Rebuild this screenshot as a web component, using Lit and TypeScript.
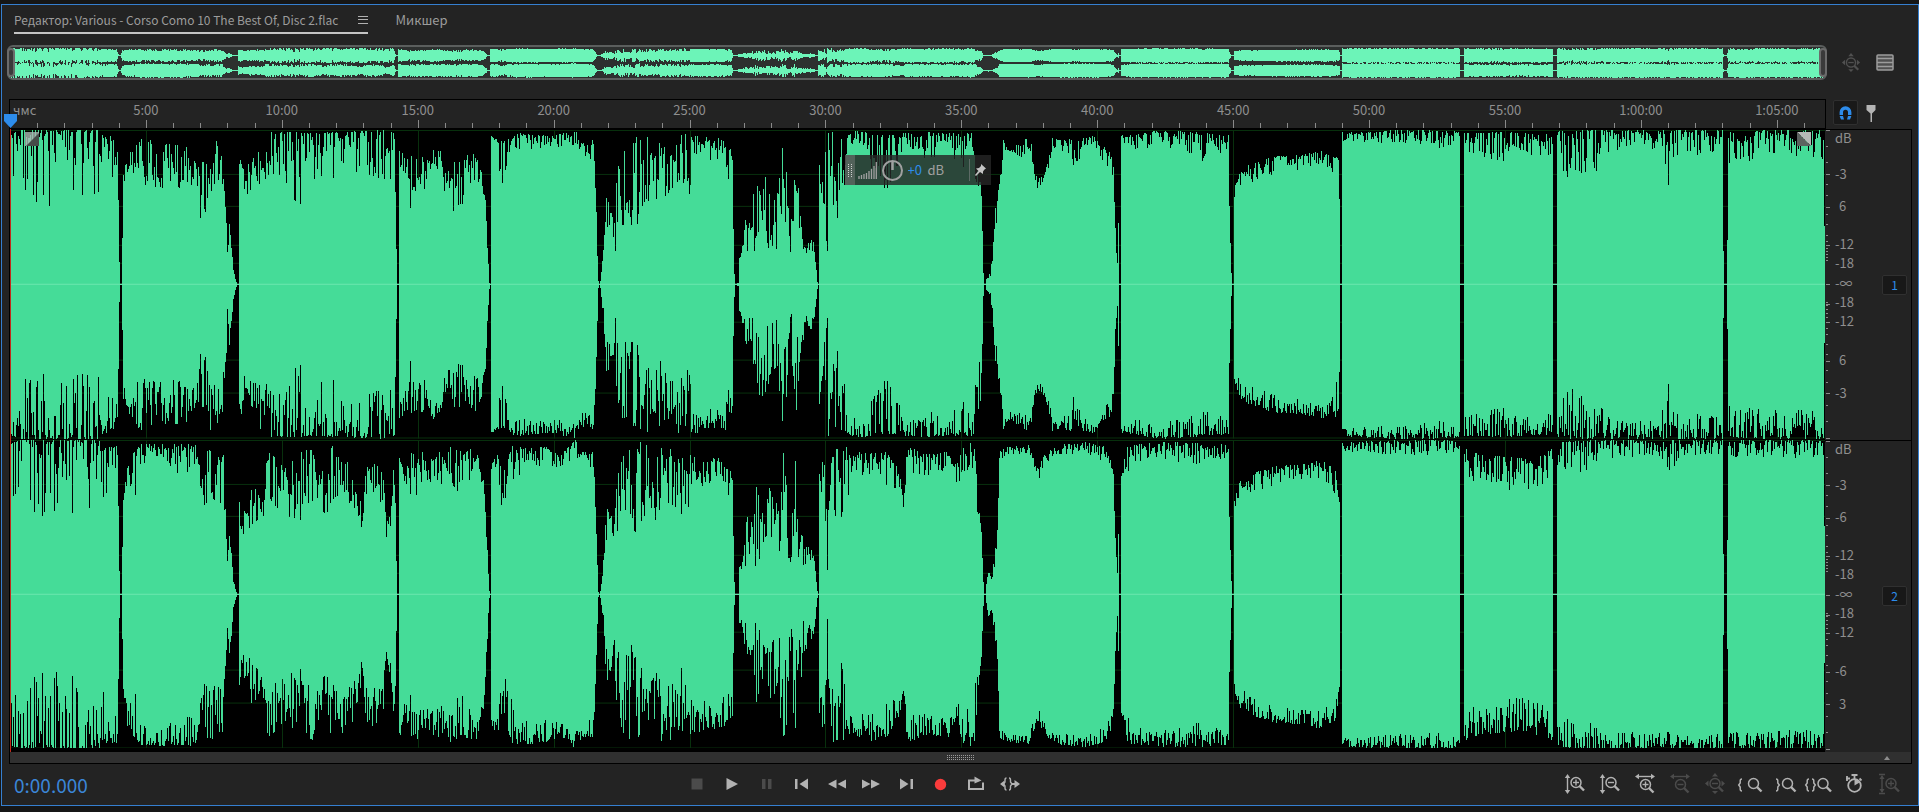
import { LitElement, html, css, svg } from "lit";
import { customElement } from "lit/decorators.js";

const WIDTH = 1815;
const HALF = 154;
const ORIGIN = 10;

/** x, distance of the outer edge from full scale, depth of the dips, exponent of the dips */
type Key = [number, number, number, number?];

const LEFT: Key[] = [
  [10, 4, 55, 4], [20, 0, 60, 5], [46, 0, 85, 5], [75, 0, 75, 5], [98, 0, 66, 5], [103, 6, 60, 3], [117, 6, 40, 2], [118, 66, 72], [119, 130, 140], [120, 154, 154],
  [121, 154, 154], [122, 106, 110], [123, 40, 50], [130, 22, 60], [140, 8, 62, 1], [188, 12, 60, 1], [192, 30, 55], [200, 32, 95], [206, 30, 90], [210, 8, 62, 1], [222, 12, 60, 1], [225, 50, 82], [227, 120, 132], [229, 94, 112], [231, 112, 124], [233, 138, 142], [235, 149, 151], [237, 154, 154],
  [238, 154, 154], [239, 30, 55], [245, 12, 66, 1], [258, 10, 55, 1], [265, 10, 64, 1], [270, 2, 48, 3], [300, 2, 80, 3], [306, 3, 40, 3], [335, 2, 76, 3], [340, 2, 40, 3], [380, 0, 50, 3], [386, 0, 66, 2], [391, 2, 60, 2], [394, 2, 15], [395, 60, 66], [396, 118, 124], [397, 154, 154],
  [398, 154, 154], [399, 16, 40], [405, 30, 60, 1], [410, 20, 80, 1], [414, 8, 76, 1], [421, 20, 70, 1], [430, 16, 40, 1], [442, 18, 45, 1], [444, 45, 62], [450, 32, 84, 1], [463, 28, 80, 1], [472, 18, 70, 1], [480, 36, 60], [485, 66, 78], [487, 110, 120], [489, 150, 153], [490, 154, 154],
  [491, 6, 8], [498, 9, 14], [500, 10, 70], [502, 12, 64], [508, 8, 28], [515, 3, 20], [550, 6, 21], [575, 0, 16], [582, 12, 30], [590, 12, 30], [593, 8, 20], [595, 42, 60], [597, 118, 130], [598, 150, 153], [599, 154, 154],
  [600, 150, 152], [603, 120, 135], [606, 68, 100], [609, 70, 100], [614, 80, 112], [616, 46, 134], [620, 18, 95, 1], [630, 8, 105, 1], [640, 2, 95, 1], [646, 4, 74, 1], [660, 8, 90, 1], [670, 6, 60, 1], [680, 4, 70, 1.5], [690, 4, 70, 1.5], [694, 5, 26], [715, 8, 32], [724, 4, 30], [727, 14, 60], [732, 18, 40], [733, 95, 105], [734, 142, 146], [735, 154, 154],
  [738, 153, 154], [739, 126, 132], [743, 112, 128], [746, 72, 128, 1], [751, 78, 128, 1], [756, 40, 126, 1], [762, 28, 118, 1], [768, 36, 126, 1], [773, 60, 122, 1], [778, 30, 118, 1], [781, 0, 110, 1], [786, 10, 90, 1], [788, 64, 124, 1], [791, 84, 126, 1], [794, 10, 90, 1], [800, 60, 130, 1], [806, 96, 128, 1], [813, 112, 122], [815, 130, 136], [817, 150, 152], [818, 154, 154],
  [819, 34, 38], [821, 42, 82], [823, 2, 80, 1], [825, 20, 120], [827, 118, 134], [828, 0, 50, 1], [835, 2, 90, 1], [841, 3, 90, 1], [848, 5, 16], [855, 0, 22], [868, 3, 30], [880, 5, 64, 1.5], [892, 5, 70], [905, 3, 14], [930, 2, 34], [945, 3, 14], [960, 2, 40], [974, 3, 44], [978, 30, 88], [980, 32, 70], [982, 92, 106], [983, 140, 145], [984, 154, 154],
  [985, 154, 154], [986, 146, 149], [990, 143, 147], [992, 125, 135], [995, 75, 100], [998, 60, 84], [1001, 36, 50], [1003, 10, 20], [1010, 20, 30], [1025, 8, 26], [1031, 14, 28], [1034, 44, 54], [1038, 48, 60], [1042, 46, 54], [1048, 30, 40], [1052, 8, 22], [1060, 10, 24], [1070, 8, 26], [1074, 14, 52], [1082, 8, 22], [1095, 6, 22], [1102, 15, 32], [1110, 22, 40], [1113, 36, 50], [1115, 96, 110], [1117, 132, 136], [1118, 92, 100], [1119, 154, 154],
  [1120, 154, 154], [1121, 5, 12], [1140, 3, 22], [1165, 0, 16], [1205, 3, 32], [1228, 5, 18], [1229, 76, 84], [1231, 140, 146], [1232, 154, 154],
  [1233, 154, 154], [1234, 58, 68], [1240, 40, 60], [1250, 34, 54], [1262, 30, 50], [1280, 25, 42], [1300, 25, 40], [1322, 20, 40], [1330, 26, 46], [1335, 22, 56], [1338, 30, 64], [1339, 60, 70], [1340, 154, 154],
  [1341, 154, 154], [1342, 2, 12], [1400, 0, 15], [1440, 0, 18], [1459, 1, 14], [1460, 154, 154], [1463, 154, 154],
  [1464, 3, 24], [1500, 2, 32], [1530, 3, 28], [1552, 3, 26], [1553, 154, 154], [1556, 154, 154],
  [1557, 0, 40], [1575, 0, 56], [1600, 0, 44], [1610, 0, 20], [1660, 0, 20], [1668, 0, 58], [1680, 0, 28], [1722, 0, 24], [1723, 110, 130], [1724, 154, 154], [1726, 154, 154], [1727, 100, 120],
  [1728, 2, 34], [1760, 0, 30], [1823, 0, 30], [1824, 96, 100], [1826, 96, 100],
];

const between = (from: Key[], lo: number, hi: number) => from.filter((k) => k[0] >= lo && k[0] < hi);

const RIGHT: Key[] = [
  ...between(LEFT, 0, 123),
  [123, 50, 60], [128, 15, 40], [134, 12, 66, 3], [140, 4, 24], [165, 3, 18], [176, 4, 40, 3], [199, 3, 26], [201, 45, 90], [206, 8, 75, 1], [210, 8, 60, 1], [224, 12, 76, 1], [226, 98, 100],
  ...between(LEFT, 227, 239),
  [239, 62, 88], [243, 72, 96, 1], [250, 45, 92, 1], [258, 42, 86, 1], [264, 36, 76, 1], [268, 8, 56, 1], [276, 15, 74, 1], [285, 26, 76, 1], [300, 8, 84, 1], [310, 3, 60, 1.5], [318, 28, 70, 1], [330, 4, 80, 1], [340, 10, 50, 1], [350, 14, 66, 1], [361, 64, 92, 1], [367, 18, 60, 1], [382, 26, 64, 1], [386, 76, 98, 1], [390, 60, 88, 1], [393, 30, 44],
  ...between(LEFT, 395, 399),
  [399, 5, 20], [404, 40, 52], [410, 12, 80, 1.3], [418, 10, 54], [430, 15, 44, 1.3], [448, 5, 46, 1.3], [465, 12, 56], [475, 5, 34], [480, 26, 44], [484, 44, 56],
  ...between(LEFT, 487, 491),
  [491, 22, 32], [498, 14, 40], [501, 30, 90], [504, 30, 76], [512, 5, 46], [530, 5, 24], [550, 8, 32], [560, 14, 28], [575, 0, 16], [582, 12, 36], [592, 12, 28], [594, 34, 50],
  ...between(LEFT, 596, 670),
  [670, 8, 64, 1.3], [680, 10, 82, 1.3], [688, 10, 78, 1.3], [692, 16, 44], [705, 18, 48], [720, 18, 38], [727, 26, 76], [732, 32, 50],
  ...between(LEFT, 733, 828),
  [828, 0, 70, 1], [840, 3, 94, 1], [848, 6, 56], [855, 14, 40], [870, 8, 36], [885, 10, 50], [896, 26, 62], [903, 48, 70], [907, 6, 36], [925, 14, 36], [948, 12, 32], [956, 26, 48], [965, 0, 36], [974, 6, 60], [978, 60, 88], [981, 92, 112], [983, 142, 146], [984, 154, 154],
  [985, 154, 154], [986, 142, 146], [988, 130, 136], [991, 138, 142], [995, 108, 122], [997, 90, 120], [998, 58, 62], [999, 12, 20], [1005, 7, 16], [1028, 5, 14], [1033, 18, 28], [1038, 28, 40], [1044, 14, 28], [1056, 4, 15], [1085, 2, 15], [1104, 6, 22], [1110, 18, 32], [1113, 34, 46],
  ...between(LEFT, 1115, 1121),
  [1121, 30, 38], [1125, 8, 34], [1134, 4, 24], [1160, 2, 20], [1200, 2, 28], [1228, 4, 18],
  ...between(LEFT, 1229, 1464),
  [1464, 6, 24], [1468, 12, 42], [1500, 16, 48], [1520, 18, 54], [1545, 12, 50], [1552, 8, 26],
  ...between(LEFT, 1553, 1557),
  [1557, 2, 30], [1590, 0, 36], [1600, 0, 18], [1660, 0, 18], [1670, 0, 36], [1680, 0, 16], [1722, 0, 16],
  ...between(LEFT, 1723, 1728),
  [1728, 0, 18], [1823, 0, 20], [1824, 86, 90], [1826, 86, 90],
];

function rng(seed: number) {
  let s = seed;
  return () => {
    s = (s + 0x6d2b79f5) | 0;
    let t = Math.imul(s ^ (s >>> 15), 1 | s);
    t = (t + Math.imul(t ^ (t >>> 7), 61 | t)) ^ t;
    return ((t ^ (t >>> 14)) >>> 0) / 4294967296;
  };
}

/** Outline of one channel, one step per column; now and then a column dips deeper. */
function outline(keys: Key[], seed: number): string {
  const rand = rng(seed);
  const top: number[] = [];
  const low: number[] = [];
  let i = 0;
  for (let c = 0; c < WIDTH; c++) {
    const x = c + ORIGIN;
    while (i < keys.length - 2 && keys[i + 1][0] <= x) i++;
    const a = keys[i];
    const b = keys[i + 1];
    const t = Math.min(1, Math.max(0, (x - a[0]) / (b[0] - a[0] || 1)));
    const outer = a[1] + (b[1] - a[1]) * t;
    const inner = a[2] + (b[2] - a[2]) * t;
    const dip = rand() < 0.16;
    const power = dip ? 0.8 : (a[3] ?? 2);
    const shared = rand();
    const mixed = rand() < 0.5 ? shared : rand();
    top.push(Math.round(outer + (inner - outer) * Math.pow(shared, power)));
    low.push(Math.round(outer + (inner - outer) * Math.pow(mixed, power)));
  }
  let d = `M0 ${top[0]}`;
  top.forEach((v, c) => (d += `V${v}H${c + 1}`));
  for (let c = WIDTH - 1; c >= 0; c--) d += `V${HALF * 2 + 1 - low[c]}H${c}`;
  return d + "Z";
}

const SHAPES = [outline(LEFT, 7), outline(RIGHT, 23)];
const MAJOR = Array.from({ length: 13 }, (_, i) => (i + 1) * 5);
const STEP = 27.18;
const GRID_ROWS = [0, 44, 76, 115, 133, 192, 230, 263, 308];
const MINOR_DB = [16, 32, 54, 65, 84, 94, 105, 111, 118, 121, 124, 127, 130, 172, 175, 179, 183, 187, 198, 204, 214, 224, 240, 252, 275, 291];
const MAJOR_DB = [0, 44, 77, 115, 154, 174, 192, 231, 263, 308];
const DB_LABELS = [
  ["dB", "-3", "6", "-12", "-18", "-∞", "-18", "-12", "6", "-3"],
  ["dB", "-3", "-6", "-12", "-18", "-∞", "-18", "-12", "-6", "3"],
];

const timeLabel = (m: number) => (m < 60 ? `${m}:00` : `${Math.floor(m / 60)}:${String(m % 60).padStart(2, "0")}:00`);

const lens = (x: number, y: number, sign: string) => svg`
  <circle cx=${x} cy=${y} r="5" fill="none" stroke="currentColor" stroke-width="1.5"/>
  <path d="M${x + 3.5} ${y + 3.5}L${x + 8} ${y + 8}" stroke="currentColor" stroke-width="2.4"/>
  ${sign ? svg`<path d="M${x - 3} ${y}h6" stroke="currentColor" stroke-width="1.4"/>` : ""}
  ${sign === "+" ? svg`<path d="M${x} ${y - 3}v6" stroke="currentColor" stroke-width="1.4"/>` : ""}`;
const vArrow = svg`<path d="M3.5 3V19" stroke="currentColor" stroke-width="1.4"/><path d="M3.5 1L6.2 5H.8ZM3.5 21L6.2 17H.8Z" fill="currentColor"/>`;
const hArrow = svg`<path d="M3 3.5H19" stroke="currentColor" stroke-width="1.4"/><path d="M1 3.5L5 .8V6.2ZM21 3.5L17 .8V6.2Z" fill="currentColor"/>`;
const star = svg`<path d="M11 0L14 3.5H8ZM11 21L14 18H8ZM1 10.5L4.5 7.5V13.5ZM21 10.5L17.500 7.500V13.5Z" fill="currentColor"/>`;
const openBrace = (x: number) => svg`<path d="M${x + 3} 6q-1.800 0-1.800 2v2l-1.500 2 1.500 2v2q0 2 1.800 2" fill="none" stroke="currentColor" stroke-width="1.500"/>`;
const closeBrace = (x: number) => svg`<path d="M${x} 6q1.800 0 1.800 2v2l1.500 2-1.500 2v2q0 2-1.800 2" fill="none" stroke="currentColor" stroke-width="1.500"/>`;

const ZOOMS = [
  { label: "Увеличить амплитуду", off: false, art: svg`${vArrow}${lens(12, 9.5, "+")}` },
  { label: "Уменьшить амплитуду", off: false, art: svg`${vArrow}${lens(12, 9.5, "-")}` },
  { label: "Увеличить время", off: false, art: svg`${hArrow}${lens(11.500, 11.5, "+")}` },
  { label: "Уменьшить время", off: true, art: svg`${hArrow}${lens(11.500, 11.5, "-")}` },
  { label: "Полное уменьшение", off: true, art: svg`${star}${lens(11, 10.5, "-")}` },
  { label: "К точке входа", off: false, art: svg`${openBrace(0)}${lens(14.5, 10.5, "")}` },
  { label: "К точке выхода", off: false, art: svg`${closeBrace(2)}${lens(13.5, 10.5, "")}` },
  { label: "К выделению", off: false, art: svg`${openBrace(-3)}${closeBrace(3)}${lens(14, 10.5, "")}` },
  {
    label: "Масштаб по времени", off: false,
    art: svg`<circle cx="10.500" cy="12.500" r="6.300" fill="none" stroke="currentColor" stroke-width="1.800"/><path d="M10.500 12.500V6.500A6 6 0 0 1 15.500 9.500Z" fill="currentColor"/><path d="M7.500 2H13.500M10.500 2.500V6.500M15.500 5.500L17.500 7.500M3 3V8M2 5.500H6" stroke="currentColor" stroke-width="1.800"/>`,
  },
  { label: "Масштаб дорожки", off: true, art: svg`<path d="M0 1.500H6M0 20.500H6" stroke="currentColor" stroke-width="1.500"/><path d="M3 3V19" stroke="currentColor" stroke-width="1.400"/><path d="M3 2L5.500 6H.5ZM3 20L5.500 16H.5Z" fill="currentColor"/>${lens(12, 10.500, "+")}` },
];

const TRANSPORT = [
  { label: "Стоп", off: true, art: svg`<path d="M5.500 5.500h11v11h-11Z" fill="currentColor"/>` },
  { label: "Воспроизведение", off: false, art: svg`<path d="M5.500 5L17 11L5.500 17Z" fill="currentColor"/>` },
  { label: "Пауза", off: true, art: svg`<path d="M6 6h3.500v10H6ZM12 6h3.500v10H12Z" fill="currentColor"/>` },
  { label: "В начало", off: false, art: svg`<path d="M4 6h2.500v10H4ZM17 5.500v11L8.500 11Z" fill="currentColor"/>` },
  { label: "Назад", off: false, art: svg`<path d="M10.500 6.500v9L2 11ZM20 6.500v9L11.500 11Z" fill="currentColor"/>` },
  { label: "Вперёд", off: false, art: svg`<path d="M1 6.500v9L9.500 11ZM10 6.500v9L19 11Z" fill="currentColor"/>` },
  { label: "В конец", off: false, art: svg`<path d="M4 5.500v11L12.500 11ZM14.500 6H17v10h-2.500Z" fill="currentColor"/>` },
  { label: "Запись", off: false, art: svg`<circle cx="9.500" cy="11.500" r="5.700" fill="#fa3c3c"/>` },
  { label: "Повтор", off: false, art: svg`<path d="M7 7.500H3V16H17V9.500" fill="none" stroke="currentColor" stroke-width="2"/><path d="M8.500 3.500L15.500 7.500L8.500 10.500ZM7 6.500h3v2H7Z" fill="currentColor"/>` },
  { label: "Пропуск выделения", off: false, art: svg`<path d="M5.500 5Q4 5 4 7V9L2.500 11L4 13V15Q4 17 5.500 17M8 5Q9.500 5 9.500 7V9L11 11L9.500 13V15Q9.500 17 8 17" fill="none" stroke="currentColor" stroke-width="1.400"/><path d="M3.500 7.500V14.500L-1 11ZM11 10h2.500V7L19 11L13.500 15V12H11Z" fill="currentColor"/>` },
];

@customElement("app-root")
export class AppRoot extends LitElement {
  static styles = css`
    :host {
      display: block;
      font-family: "Noto Sans CJK SC", "Noto Sans", sans-serif;
      font-size: 13px;
      line-height: 20px;
      color: #8f8f8f;
    }
    * { box-sizing: border-box; }
    button, input { font: inherit; color: inherit; background: none; border: 0; padding: 0; margin: 0; }
    button { display: flex; align-items: center; justify-content: center; }
    svg { display: block; }
    .page { height: 100vh; min-height: 480px; background: #161616; padding: 4px 0 6px 1px; }
    .panel { height: 100%; display: flex; flex-direction: column; background: #232323; border: 1px solid #357fd0; padding: 0 6px 0 7px; }
    .tabs { height: 40px; flex: none; display: flex; align-items: flex-start; gap: 27px; padding: 5px 5px 0; }
    .tab { height: 24px; gap: 20px; padding-bottom: 2px; border-bottom: 2px solid transparent; white-space: nowrap; color: #9c9c9c; }
    .tab.on { border-color: #c4c4c4; font-size: 12px; }
    .overview-row { flex: none; display: flex; align-items: center; height: 35px; margin: 0 0 19px -2px; }
    .overview { position: relative; flex: 1; height: 35px; padding-top: 1px; border: 2px solid #5b5e5d; border-radius: 6px; background: #2d302f; display: grid; grid-template-rows: 1fr 1fr; }
    .overview svg { width: 100%; height: 100%; color: #6cf4b8; min-height: 0; overflow: hidden; }
    .grip { position: absolute; top: 1px; width: 8px; height: 29px; border: 2px solid #6b6b6b; border-radius: 4px; background: #3a3a3a; }
    .grip.start { left: -2px; }
    .grip.end { right: -2px; }
    .side-tools { flex: none; width: 85px; display: flex; align-items: center; gap: 15px; padding-left: 14px; color: #505050; }
    .side-tools .list { color: #9c9c9c; }
    .editor { flex: 1; min-height: 0; display: grid; grid-template-columns: minmax(0, 1fr) 87px; grid-template-rows: 30px minmax(0, 1fr) 12px; border-left: 1px solid #000; }
    .ruler { position: relative; display: grid; border-top: 1px solid #000; border-bottom: 1px solid #000; border-right: 1px solid #000; margin-right: -1px; }
    .ruler > * { grid-area: 1 / 1; }
    .ruler svg { width: 100%; height: 28px; color: #8a8a8a; }
    .times { display: flex; overflow: hidden; }
    .unit { flex: none; width: 3.744%; padding-left: 3px; }
    .time { flex: none; width: 7.488%; text-align: center; }
    .ruler .playhead { position: absolute; left: -6px; top: 14px; width: 13px; height: 14px; }
    .ruler-tools { display: flex; align-items: flex-start; gap: 7px; padding: 1px 0 0 8px; color: #b4b4b4; }
    .snap { width: 25px; height: 25px; background: #191919; border: 1px solid #2f2f2f; border-radius: 2px; color: #2d8ceb; }
    .marker { height: 25px; width: 12px; }
    .waves { position: relative; display: grid; grid-template-rows: 1fr 1fr; gap: 1px; background: #000; padding: 1px 0 4px; }
    .waves > svg { width: 100%; height: 100%; min-height: 0; color: #45dc98; }
    .cursor { position: absolute; left: 0; top: 0; bottom: 0; width: 1px; background: #c22a1c; }
    .fade { position: absolute; top: 3px; width: 14px; height: 14px; }
    .fade.in { left: 15px; }
    .fade.out { right: 14px; }
    .hud { position: absolute; left: 50%; top: 26px; transform: translateX(-50%); width: 146px; height: 30px; display: flex; align-items: center; background: rgba(38, 38, 38, 0.82); color: #a0a0a0; }
    .hud-grip { width: 10px; height: 30px; background: rgba(130, 130, 130, 0.45); display: grid; place-items: center; margin-right: 3px; }
    .hud-bars { margin-right: 5px; }
    .hud label { display: flex; flex: 1; gap: 4px; margin-left: 5px; }
    .hud input { width: 16px; height: 20px; color: #2d8ceb; }
    .hud-pin { width: 22px; height: 22px; border-left: 1px solid #5d6a65; color: #c4c4c4; }
    .axis { display: grid; grid-template-rows: 1fr 1fr; border-right: 1px solid #000; padding-bottom: 4px; }
    .scale { display: grid; grid-template-columns: 6px 1fr 29px; border-top: 1px solid #000; }
    .scale svg { width: 6px; height: 100%; color: #8a8a8a; }
    .labels { display: grid; padding-left: 4px; grid-template-rows: 8fr 36fr 32fr 38fr 19fr 20fr 18fr 19fr 39fr 33fr 47fr; line-height: 0; min-height: 0; }
    .labels span { align-self: end; height: 0; white-space: pre; }
    .labels .bare { padding-left: 4px; }
    .channel { align-self: center; width: 25px; height: 20px; background: #181818; border: 1px solid #303030; border-radius: 2px; color: #2d8ceb; font-size: 12px; }
    .scroller { grid-column: 1 / -1; display: flex; align-items: center; background: #303030; border-bottom: 1px solid #000; border-right: 1px solid #000; }
    .thumb { flex: 1; display: flex; justify-content: center; padding-left: 48px; }
    .up { width: 48px; }
    .footer { flex: none; height: 41px; display: flex; align-items: center; padding-bottom: 2px; }
    .clock { flex: none; width: 142px; padding: 3px 0 0 5px; font-size: 19px; line-height: 30px; color: #3b86d8; }
    .transport { flex: 1; display: flex; justify-content: center; }
    .zooms { flex: none; display: flex; padding-right: 5px; }
    .tool { width: 35px; height: 35px; color: #b2b2b2; }
    .tool[disabled] { color: #4b4b4b; }
    .tool svg { overflow: visible; }
  `;

  private wave(i: number) {
    return svg`<path d=${SHAPES[i]} fill="currentColor" shape-rendering="crispEdges"/>`;
  }

  private channel(i: number) {
    return html`<svg viewBox="0 0 1815 309" preserveAspectRatio="none" role="img" aria-label="Канал ${i + 1}">
      <g stroke="#08300d" stroke-width="1" shape-rendering="crispEdges">
        ${GRID_ROWS.map((y) => svg`<path d="M0 ${y + 0.5}H1815"/>`)}
        ${MAJOR.map((m) => svg`<path d="M${Math.round(m * STEP) + 0.5} 0V309"/>`)}
      </g>
      <path d="M0 154.500H1815" stroke="#7fe0b0" stroke-width="1" shape-rendering="crispEdges" />
      ${this.wave(i)}
      <path d="M0 154.500H1815" stroke="#c8ffe4" stroke-opacity=".3" stroke-width="1" shape-rendering="crispEdges" />
    </svg>`;
  }

  private scale(i: number) {
    return html`<div class="scale">
      <svg viewBox="0 0 6 310" preserveAspectRatio="none" shape-rendering="crispEdges" stroke="currentColor">
        ${MAJOR_DB.map((y) => svg`<path d="M1 ${y + 0.5}H5"/>`)}
        ${MINOR_DB.map((y) => svg`<path d="M1 ${y + 0.5}H3"/>`)}
      </svg>
      <div class="labels">${DB_LABELS[i].map((t) => html`<span class=${/^\d/.test(t) ? "bare" : ""}>${t}</span>`)}</div>
      <button class="channel" aria-label="Канал ${i + 1}">${i + 1}</button>
    </div>`;
  }

  private tool(t: { label: string; off: boolean; art: unknown }) {
    return html`<button class="tool" aria-label=${t.label} ?disabled=${t.off}>
      <svg width="22" height="22" viewBox="0 0 22 22">${t.art}</svg>
    </button>`;
  }

  render() {
    const minutes = Array.from({ length: 66 }, (_, i) => i + 1);
    const dots = Array.from({ length: 14 }, (_, i) => i * 2);
    return html`<div class="page"><main class="panel">
      <nav class="tabs">
        <button class="tab on">Редактор: Various - Corso Como 10 The Best Of, Disc 2.flac
          <svg width="10" height="10" viewBox="0 0 10 10" stroke="#b0b0b0" shape-rendering="crispEdges"><path d="M0 1.500H10M0 4.500H10M0 8.500H10"/></svg>
        </button>
        <button class="tab">Микшер</button>
      </nav>

      <section class="overview-row">
        <div class="overview">
          ${[0, 1].map((i) => html`<svg viewBox="0 -6 1815 320" preserveAspectRatio="none">${this.wave(i)}<path d="M0 154.500H1815" stroke="currentColor" stroke-width="20" /></svg>`)}
          <span class="grip start"></span><span class="grip end"></span>
        </div>
        <div class="side-tools">
          <button aria-label="Полное уменьшение" disabled><svg width="20" height="20" viewBox="0 0 22 22">${star}${lens(11, 10.5, "-")}</svg></button>
          <button class="list" aria-label="Список"><svg width="18" height="17" viewBox="0 0 18 17"><rect x="1" y="1" width="16" height="15" rx="1" fill="#505050" stroke="currentColor" stroke-width="1.500"/><path d="M1 4.500H17M1 8.500H17M1 12.500H17" stroke="currentColor" stroke-width="1.500"/></svg></button>
        </div>
      </section>

      <section class="editor">
        <div class="ruler">
          <svg viewBox="0 0 1815 28" preserveAspectRatio="none" stroke="currentColor" shape-rendering="crispEdges">
            ${minutes.map((m) => svg`<path d="M${Math.round(m * STEP) + 0.5} ${m % 5 ? 23 : 20}V28"/>`)}
          </svg>
          <div class="times">
            <span class="unit">чмс</span>
            ${MAJOR.map((m) => html`<span class="time">${timeLabel(m)}</span>`)}
          </div>
          <svg class="playhead" viewBox="0 0 13 14"><path d="M0 0H13V7L6.500 14L0 7Z" fill="#2d8ceb"/></svg>
        </div>
        <div class="ruler-tools">
          <button class="snap" aria-label="Привязка"><svg width="15" height="15" viewBox="0 0 15 15"><path d="M3.300 10V7.200a4.200 4.200 0 0 1 8.400 0V10" fill="none" stroke="currentColor" stroke-width="3.400"/><path d="M1.600 11h3.400l1 3.500H3ZM10 11h3.400L12 14.500H9Z" fill="currentColor"/></svg></button>
          <button class="marker" aria-label="Маркер"><svg width="10" height="18" viewBox="0 0 10 18"><path d="M.5 1h9v5L6 9.500V18H4.500V9.500L.5 6Z" fill="currentColor"/></svg></button>
        </div>

        <div class="waves">
          ${this.channel(0)}${this.channel(1)}
          <span class="cursor"></span>
          <div class="fade in"><svg width="14" height="14" viewBox="0 0 14 14"><path d="M0 0H14V14H0Z" fill="#a9b8b1" opacity=".8"/><path d="M14 1V14H1Z" fill="#454b48"/></svg></div>
          <div class="fade out"><svg width="14" height="14" viewBox="0 0 14 14"><path d="M0 0H14V14Z" fill="#b5b8b6"/><path d="M0 0L14 14H0Z" fill="#5c625f"/></svg></div>
          <div class="hud">
            <div class="hud-grip"><svg width="4" height="13" viewBox="0 0 4 13"><path d="M.5 0V13M3.500 0V13" stroke="#d0d0d0" stroke-dasharray="1 1"/></svg></div>
            <svg class="hud-bars" width="19" height="18" viewBox="0 0 19 18"><path d="M1 15V18M3.500 14V18M6 13V18M8.500 12V18M11 10V18M13.500 8V18M16 5V18M18.300 1V18" stroke="currentColor" stroke-width="1.300"/></svg>
            <svg width="21" height="21" viewBox="0 0 21 21"><circle cx="10.500" cy="10.500" r="9.500" fill="none" stroke="currentColor" stroke-width="2"/><path d="M10.500 2V10" stroke="currentColor" stroke-width="2.500"/></svg>
            <label><input value="+0" aria-label="Громкость" />dB</label>
            <button class="hud-pin" aria-label="Закрепить"><svg width="11" height="12" viewBox="0 0 11 12"><path d="M6 0L11 4.500L9.500 5.500L8 7.500L8 10L5 8L1 12L0 11L3.500 7L1 4.500L4 4L6 2Z" fill="currentColor"/></svg></button>
          </div>
        </div>
        <div class="axis">${this.scale(0)}${this.scale(1)}</div>

        <div class="scroller">
          <div class="thumb"><svg width="28" height="5" viewBox="0 0 28 5" fill="#9a9a9a" shape-rendering="crispEdges">${dots.map((x) => svg`<path d="M${x} 0h1v1h-1ZM${x} 2h1v1h-1ZM${x} 4h1v1h-1Z"/>`)}</svg></div>
          <button class="up" aria-label="Развернуть"><svg width="6" height="4" viewBox="0 0 6 4"><path d="M0 4L3 0L6 4Z" fill="#8c8c8c"/></svg></button>
        </div>
      </section>

      <footer class="footer">
        <div class="clock">0:00.000</div>
        <div class="transport">${TRANSPORT.map((t) => this.tool(t))}</div>
        <div class="zooms">${ZOOMS.map((t) => this.tool(t))}</div>
      </footer>
    </main></div>`;
  }
}
